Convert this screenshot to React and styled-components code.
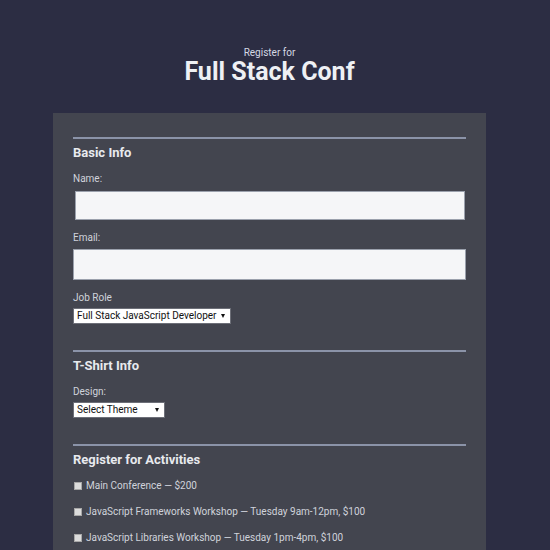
import React from 'react';
import styled, { createGlobalStyle } from 'styled-components';

const GlobalStyle = createGlobalStyle`
  html, body {
    margin: 0;
    padding: 0;
    overflow: hidden;
    background: #2c2d43;
    font-family: Roboto, "Liberation Sans", sans-serif;
  }
`;

const Page = styled.div`
  width: 433px;
  margin-left: 53px;
  padding-top: 48px;
`;

const Header = styled.header`
  text-align: center;
  margin-bottom: 27px;
`;

const Kicker = styled.p`
  margin: 0;
  font-size: 10px;
  line-height: 10px;
  color: #d5d8e3;
`;

const Title = styled.h1`
  margin: 0;
  font-size: 25px;
  line-height: 28px;
  font-weight: 700;
  color: #eef0f4;
`;

const Card = styled.form`
  background: #43454f;
  padding: 24px 20px 40px;
`;

const Section = styled.fieldset`
  border: none;
  border-top: 2px solid #8b93a8;
  margin: 0 0 26px;
  padding: 0;
  min-width: 0;
`;

const Legend = styled.h2`
  margin: 6px 0 12px;
  font-size: 13px;
  line-height: 16px;
  font-weight: 700;
  color: #e8eaee;
`;

const Label = styled.label`
  display: block;
  font-size: 10px;
  line-height: 12px;
  color: #d0d3db;
  margin-bottom: ${p => p.gap || 5}px;
`;

const Field = styled.div`
  margin-bottom: 12px;
`;

const TextInput = styled.input`
  display: block;
  box-sizing: border-box;
  width: ${p => (p.inset ? 'calc(100% - 3px)' : '100%')};
  margin-left: ${p => (p.inset ? '2px' : '0')};
  height: ${p => p.h || 30}px;
  border: 1px solid #9ba1ad;
  background: #f5f6f8;
  padding: 0 6px;
  font: inherit;
  outline: none;
`;

const SelectWrap = styled.div`
  position: relative;
  width: ${p => p.w}px;
  height: 16px;
`;

const Select = styled.select`
  appearance: none;
  -webkit-appearance: none;
  display: block;
  box-sizing: border-box;
  width: 100%;
  height: 100%;
  margin: 0;
  border: 1px solid #6d6f78;
  border-radius: 0;
  background: #ffffff;
  color: #111;
  font-family: Roboto, "Liberation Sans", sans-serif;
  font-size: 10px;
  line-height: 14px;
  padding: 0 8px 0 3px;
  outline: none;
`;

const Arrow = styled.span`
  position: absolute;
  right: 6px;
  top: 6px;
  width: 0;
  height: 0;
  border-left: 2.5px solid transparent;
  border-right: 2.5px solid transparent;
  border-top: 4px solid #111;
  pointer-events: none;
`;

const Activity = styled.label`
  display: flex;
  align-items: center;
  font-size: 10px;
  line-height: 12px;
  color: #d0d3db;
  margin-bottom: 14px;
`;

const Check = styled.input`
  appearance: none;
  -webkit-appearance: none;
  box-sizing: border-box;
  width: 8px;
  height: 8px;
  margin: 0 4px 1px 1px;
  background: #dcdcdc;
  border: 1px solid #a8a8a8;
`;

const activities = [
  'Main Conference — $200',
  'JavaScript Frameworks Workshop — Tuesday 9am-12pm, $100',
  'JavaScript Libraries Workshop — Tuesday 1pm-4pm, $100',
];

const App = () => {
  return (
    <>
      <GlobalStyle />
      <Page>
        <Header>
          <Kicker>Register for</Kicker>
          <Title>Full Stack Conf</Title>
        </Header>
        <Card>
          <Section>
            <Legend>Basic Info</Legend>
            <Field>
              <Label htmlFor="name" gap={6}>Name:</Label>
              <TextInput id="name" type="text" inset h={29} />
            </Field>
            <Field>
              <Label htmlFor="mail">Email:</Label>
              <TextInput id="mail" type="email" h={31} />
            </Field>
            <Label htmlFor="title" gap={4}>Job Role</Label>
            <SelectWrap w={158}>
              <Select id="title" defaultValue="full-stack">
                <option value="full-stack">Full Stack JavaScript Developer</option>
                <option value="front-end">Front End Developer</option>
                <option value="back-end">Back End Developer</option>
              </Select>
              <Arrow />
            </SelectWrap>
          </Section>
          <Section>
            <Legend>T-Shirt Info</Legend>
            <Label htmlFor="design" gap={4}>Design:</Label>
            <SelectWrap w={92}>
              <Select id="design" defaultValue="">
                <option value="">Select Theme</option>
                <option value="js puns">Theme - JS Puns</option>
                <option value="heart js">Theme - I ♥ JS</option>
              </Select>
              <Arrow />
            </SelectWrap>
          </Section>
          <Section>
            <Legend>Register for Activities</Legend>
            {activities.map(a => (
              <Activity key={a}>
                <Check type="checkbox" />
                {a}
              </Activity>
            ))}
          </Section>
        </Card>
      </Page>
    </>
  );
};

export default App;
